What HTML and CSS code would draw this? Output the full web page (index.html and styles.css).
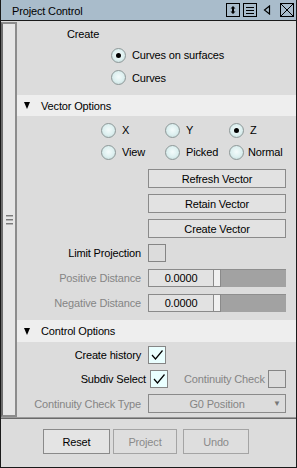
FILE: index.html
```html
<!DOCTYPE html>
<html>
<head>
<meta charset="utf-8">
<link rel="stylesheet" href="styles.css">
</head>
<body>
<div class="window">
  <div class="titlebar">
    <span class="title">Project Control</span>
    <div class="tb-icons">
      <svg class="tb-box" width="14" height="14" viewBox="0 0 14 14">
        <rect x="0.5" y="0.5" width="13" height="13" fill="none" stroke="#000"/>
        <path d="M7 3 L9.5 5.5 L4.5 5.5 Z M7 11 L9.5 8.5 L4.5 8.5 Z" fill="#000"/>
        <rect x="6" y="5" width="2" height="4" fill="#000"/>
      </svg>
      <svg class="tb-box" width="14" height="14" viewBox="0 0 14 14">
        <rect x="0.5" y="0.5" width="13" height="13" fill="none" stroke="#000"/>
        <path d="M3 4.5 H11 M3 7.5 H11 M3 10.5 H11" stroke="#000" stroke-width="1"/>
      </svg>
      <svg class="tb-tri" width="8" height="10" viewBox="0 0 8 10">
        <path d="M6.5 1 L1.5 5 L6.5 9 Z" fill="none" stroke="#000" stroke-width="1.2"/>
      </svg>
      <svg class="tb-box" width="14" height="14" viewBox="0 0 14 14">
        <rect x="0.5" y="0.5" width="13" height="13" fill="none" stroke="#000"/>
        <path d="M1 1 L13 13 M13 1 L1 13" stroke="#000" stroke-width="1"/>
      </svg>
    </div>
  </div>
  <div class="main">
    <div class="rail"><div class="grip"><i></i><i></i><i></i></div></div>
    <div class="content">
      <div class="create-block">
        <div class="create-label">Create</div>
        <div class="radio-line line1"><span class="radio on"></span><span>Curves on surfaces</span></div>
        <div class="radio-line line2"><span class="radio"></span><span>Curves</span></div>
      </div>
      <div class="band"><span class="tri"></span><span>Vector Options</span></div>
      <div class="vector-block">
        <div class="radio-grid">
          <div class="rcell"><span class="radio"></span><span class="rl">X</span></div>
          <div class="rcell"><span class="radio"></span><span class="rl">Y</span></div>
          <div class="rcell"><span class="radio on"></span><span class="rl">Z</span></div>
          <div class="rcell"><span class="radio"></span><span class="rl">View</span></div>
          <div class="rcell"><span class="radio"></span><span class="rl">Picked</span></div>
          <div class="rcell"><span class="radio"></span><span class="rl narrow">Normal</span></div>
        </div>
        <div class="form-row first-btn"><span></span><div class="btn">Refresh Vector</div></div>
        <div class="form-row btn-row"><span></span><div class="btn">Retain Vector</div></div>
        <div class="form-row btn-row"><span></span><div class="btn">Create Vector</div></div>
        <div class="form-row limit-row"><span class="lbl">Limit Projection</span><div><span class="check"></span></div></div>
        <div class="form-row slider-row first-slider">
          <span class="lbl dim">Positive Distance</span>
          <div class="slider"><span class="field">0.0000</span><span class="handle"></span><span class="track"></span></div>
        </div>
        <div class="form-row slider-row">
          <span class="lbl dim">Negative Distance</span>
          <div class="slider"><span class="field">0.0000</span><span class="handle"></span><span class="track"></span></div>
        </div>
      </div>
      <div class="band band2"><span class="tri"></span><span>Control Options</span></div>
      <div class="control-block">
        <div class="form-row hist-row">
          <span class="lbl">Create history</span>
          <div><span class="check on"><svg width="16" height="16" viewBox="0 0 16 16"><path d="M3 8 L6.5 12 L13.5 3.5" fill="none" stroke="#000" stroke-width="1.2"/></svg></span></div>
        </div>
        <div class="subdiv-row">
          <span class="lbl subdiv-lbl">Subdiv Select</span>
          <span class="check on"><svg width="16" height="16" viewBox="0 0 16 16"><path d="M3 8 L6.5 12 L13.5 3.5" fill="none" stroke="#000" stroke-width="1.2"/></svg></span>
          <span class="dim cc-lbl">Continuity Check</span>
          <span class="check"></span>
        </div>
        <div class="form-row dd-row">
          <span class="lbl dim">Continuity Check Type</span>
          <div class="dropdown"><span></span><span class="dd-text">G0 Position</span><span class="dd-arrow">&#9660;</span></div>
        </div>
      </div>
    </div>
  </div>
  <div class="footer">
    <div class="fbtn reset">Reset</div>
    <div class="fbtn disabled project">Project</div>
    <div class="fbtn disabled undo">Undo</div>
  </div>
</div>
</body>
</html>
```
FILE: styles.css
```css
html, body {
  margin: 0;
  padding: 0;
  background: #dcdcdc;
}
body {
  font-family: "Liberation Sans", Arial, sans-serif;
  font-size: 11px;
  letter-spacing: -0.15px;
  color: #000;
}
.window {
  width: 297px;
  height: 468px;
  box-sizing: border-box;
  border: 1px solid #1a1a1a;
  border-top: none;
  display: flex;
  flex-direction: column;
  background: #dcdcdc;
  overflow: hidden;
}
.titlebar {
  height: 20px;
  flex: none;
  border-bottom: 1px solid #1a1a1a;
  background: #a9bccb;
  display: flex;
  align-items: center;
  padding-left: 11px;
}
.title {
  flex: 1;
  font-size: 11px;
  padding-top: 1px;
}
.tb-icons {
  display: flex;
  align-items: center;
  height: 20px;
  margin-right: 2px;
}
.tb-box {
  display: block;
  margin-left: 3px;
}
.tb-icons .tb-box:first-child { margin-left: 0; }
.tb-tri {
  display: block;
  margin: 0 6px 0 6px;
}
.main {
  height: 396px;
  flex: none;
  display: flex;
}
.rail {
  width: 16px;
  box-sizing: border-box;
  margin-top: 1px;
  border-left: 2px solid #6e6e6e;
  border-right: 2px solid #8c8c8c;
  border-top: 2px solid #8c8c8c;
  border-bottom: 2px solid #8c8c8c;
  background: #e6e6e6;
  display: flex;
  align-items: center;
  justify-content: center;
}
.grip {
  display: flex;
  flex-direction: column;
  gap: 2px;
  margin-left: 1px;
}
.grip i {
  display: block;
  width: 7px;
  height: 1px;
  border-top: 1px solid #7a7a7a;
  background: #b4b4b4;
}
.content {
  flex: 1;
  display: flex;
  flex-direction: column;
}
.create-block {
  height: 74px;
  box-sizing: border-box;
  padding-top: 3px;
}
.create-label {
  height: 20px;
  line-height: 20px;
  padding-left: 50px;
}
.radio-line {
  display: flex;
  align-items: center;
  padding-left: 94px;
  gap: 6px;
}
.line1 { height: 22px; }
.line2 { height: 23px; }
.radio {
  width: 15px;
  height: 15px;
  box-sizing: border-box;
  border-radius: 50%;
  border: 1px solid #8e9999;
  background: radial-gradient(circle at 50% 45%, #f4fbfb 0%, #dcefef 55%, #b8cccc 100%);
  display: inline-flex;
  align-items: center;
  justify-content: center;
  flex: none;
}
.radio.on::after {
  content: "";
  width: 5px;
  height: 5px;
  border-radius: 50%;
  background: #000;
}
.band {
  height: 21px;
  background: #eeeeee;
  display: flex;
  align-items: center;
  padding-left: 7px;
}
.band2 { height: 22px; }
.tri {
  width: 0;
  height: 0;
  border-left: 3.5px solid transparent;
  border-right: 3.5px solid transparent;
  border-top: 7px solid #000;
  margin-right: 11px;
}
.vector-block {
  height: 204px;
  box-sizing: border-box;
  padding-top: 3px;
}
.radio-grid {
  display: grid;
  grid-template-columns: repeat(3, 64px);
  grid-auto-rows: 22px;
  padding-left: 84px;
}
.rcell {
  display: flex;
  align-items: center;
  gap: 6px;
}
.rl.narrow { margin-left: -2px; }
.form-row {
  display: grid;
  grid-template-columns: 124px 138px;
  column-gap: 7px;
  align-items: center;
}
.lbl {
  text-align: right;
  white-space: nowrap;
}
.dim { color: #858585; }
.first-btn { margin-top: 6px; }
.btn-row { margin-top: 6px; }
.btn {
  height: 19px;
  box-sizing: border-box;
  border: 1px solid #8a8a8a;
  background: #e2e2e2;
  display: flex;
  align-items: center;
  justify-content: center;
}
.limit-row { margin-top: 6px; height: 18px; }
.check {
  width: 18px;
  height: 18px;
  box-sizing: border-box;
  border: 1px solid #858585;
  display: flex;
  align-items: center;
  justify-content: center;
  background: #dcdcdc;
}
.check.on { background: #eaffff; }
.check svg { display: block; }
.slider-row { height: 18px; margin-top: 7px; }
.slider {
  display: flex;
  height: 18px;
}
.field {
  width: 66px;
  box-sizing: border-box;
  border: 1px solid #8a8a8a;
  background: #e2e2e2;
  display: flex;
  align-items: center;
  justify-content: center;
}
.handle {
  width: 7px;
  box-sizing: border-box;
  border: 1px solid #8a8a8a;
  border-left: none;
  background: #f0f0f0;
}
.track {
  flex: 1;
  background: #a2a2a2;
  border-top: 1px solid #8e8e8e;
}
.control-block {
  height: 75px;
  box-sizing: border-box;
  padding-top: 4px;
}
.hist-row { height: 18px; }
.subdiv-row {
  display: flex;
  align-items: center;
  height: 18px;
  margin-top: 6px;
}
.subdiv-lbl {
  width: 129px;
  margin-right: 4px;
}
.cc-lbl {
  margin-left: 16px;
  margin-right: 3px;
  white-space: nowrap;
}
.dd-row { height: 19px; margin-top: 6px; }
.dropdown {
  height: 19px;
  box-sizing: border-box;
  border: 1px solid #8a8a8a;
  display: grid;
  grid-template-columns: 16px 1fr 16px;
  align-items: center;
  color: #858585;
}
.dd-text { text-align: center; }
.dd-arrow {
  font-size: 8px;
  text-align: center;
  color: #777;
}
.footer {
  flex: 1;
  border-top: 1px solid #9a9a9a;
  box-shadow: inset 0 1px 0 #6a6a6a;
  display: flex;
  align-items: flex-start;
  padding-top: 11px;
  padding-left: 42px;
}
.fbtn {
  height: 25px;
  box-sizing: border-box;
  border: 1px solid #8a8a8a;
  background: #e4e4e4;
  display: flex;
  align-items: center;
  justify-content: center;
}
.fbtn.disabled {
  color: #8a8a8a;
  border-color: #a4a4a4;
  background: #dedede;
}
.reset { width: 67px; }
.project { width: 64px; margin-left: 3px; }
.undo { width: 66px; margin-left: 6px; }
```
